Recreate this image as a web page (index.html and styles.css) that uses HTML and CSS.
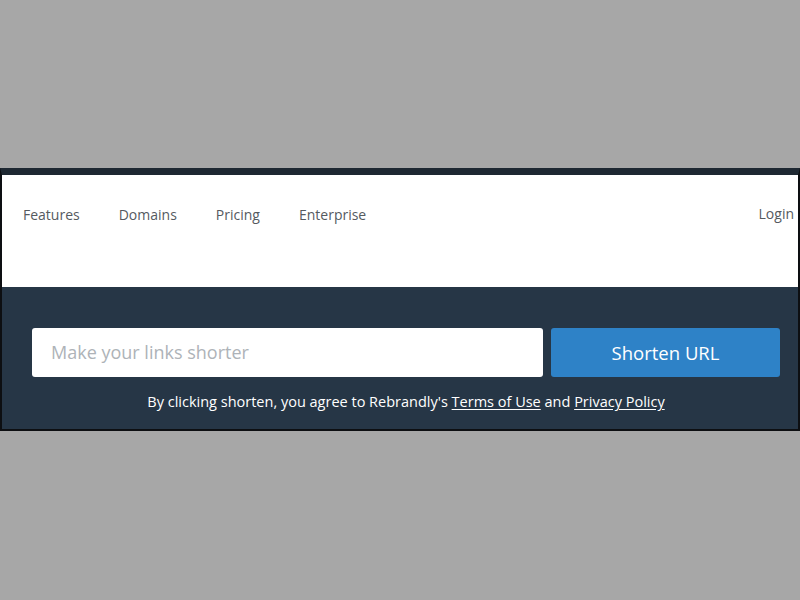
FILE: index.html
```html
<!DOCTYPE html>
<html>
<head>
<meta charset="utf-8">
<link rel="stylesheet" href="styles.css">
</head>
<body>
<div class="frame">
  <header class="header">
    <nav class="nav">
      <a class="nav-link">Features</a>
      <a class="nav-link">Domains</a>
      <a class="nav-link">Pricing</a>
      <a class="nav-link">Enterprise</a>
    </nav>
    <a class="login">Login</a>
  </header>
  <section class="hero">
    <div class="form">
      <div class="input">Make your links shorter</div>
      <div class="button">Shorten URL</div>
    </div>
    <p class="terms">By clicking shorten, you agree to Rebrandly's <span class="u">Terms of Use</span> and <span class="u">Privacy Policy</span></p>
  </section>
</div>
</body>
</html>
```
FILE: styles.css
```css
html, body {
  margin: 0;
  padding: 0;
}
body {
  background: #a7a7a7;
  font-family: "Open Sans", "Liberation Sans", sans-serif;
  width: 800px;
  height: 600px;
  overflow: hidden;
}
.frame {
  margin-top: 168px;
  border-top: 7px solid #1e2832;
  border-left: 2px solid #0d0f12;
  border-right: 2px solid #0d0f12;
  border-bottom: 2px solid #0d0f12;
  display: flex;
  flex-direction: column;
}
.header {
  background: #ffffff;
  height: 112px;
  display: flex;
  align-items: flex-start;
  justify-content: space-between;
  padding: 0 4px 0 21px;
}
.nav {
  display: flex;
  gap: 39px;
  padding-top: 30px;
}
.nav-link, .login {
  font-size: 14px;
  color: #555a5f;
  line-height: 20px;
}
.login {
  padding-top: 29px;
}
.hero {
  background: #263646;
  height: 142px;
  box-sizing: border-box;
  padding: 41px 18px 0 30px;
}
.form {
  display: flex;
  gap: 8px;
  height: 49px;
}
.input {
  width: 511px;
  background: #ffffff;
  border-radius: 3px;
  box-sizing: border-box;
  padding-left: 19px;
  padding-bottom: 1px;
  font-size: 18px;
  color: #aeb3b8;
  display: flex;
  align-items: center;
}
.button {
  flex: 1;
  background: #2e82c7;
  border-radius: 3px;
  color: #ffffff;
  font-size: 18.5px;
  padding-bottom: 1px;
  display: flex;
  align-items: center;
  justify-content: center;
}
.terms {
  margin: 15px 0 0;
  text-align: center;
  color: #ffffff;
  font-size: 14.5px;
  line-height: 20px;
}
.u {
  text-decoration: underline;
  text-underline-offset: 2px;
}
```
